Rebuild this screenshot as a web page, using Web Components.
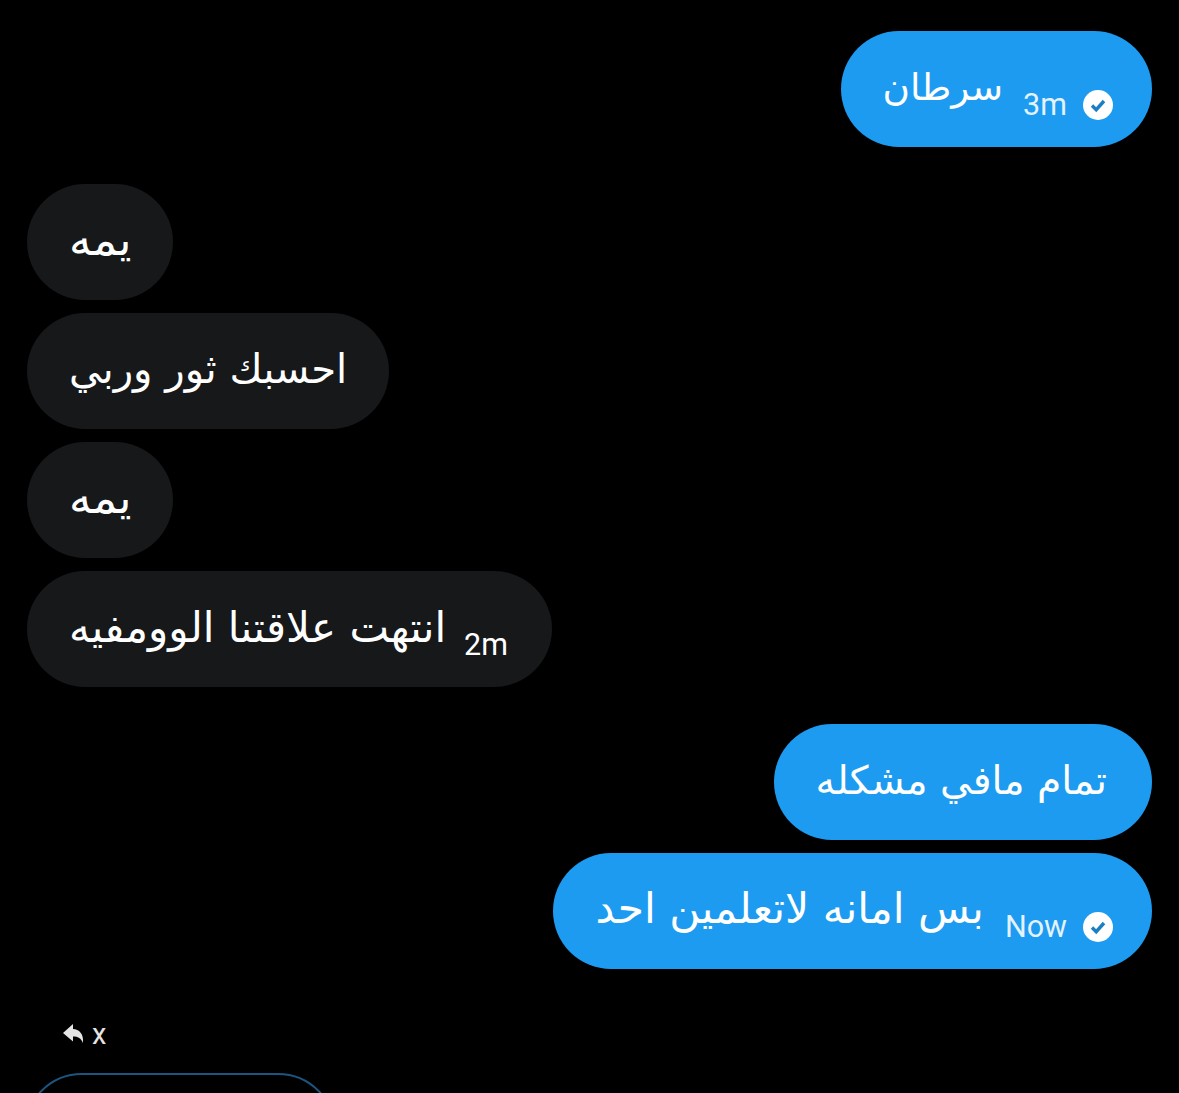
<!DOCTYPE html>
<html>
<head>
<meta charset="utf-8">
<title>Messages</title>
<style>
  html, body { margin: 0; height: 100%; background: #000; overflow: hidden; }
  body { font-family: "DejaVu Sans", sans-serif; }
</style>
</head>
<body>
<chat-thread>
  <chat-bubble sent time="3m" read size="37.4" trail="20">سرطان</chat-bubble>
  <chat-bubble group size="44.8">يمه</chat-bubble>
  <chat-bubble size="40.2">احسبك ثور وربي</chat-bubble>
  <chat-bubble size="44.8">يمه</chat-bubble>
  <chat-bubble time="2m" size="42" trail="18">انتهت علاقتنا الوومفيه</chat-bubble>
  <chat-bubble sent group size="39.3" trail="3">تمام مافي مشكله</chat-bubble>
  <chat-bubble sent time="Now" read size="42.4" trail="21">بس امانه لاتعلمين احد</chat-bubble>
  <reply-label>x</reply-label>
  <reply-box></reply-box>
</chat-thread>
<script>
(function () {
    let threadTmpl = document.createElement("template");
    threadTmpl.innerHTML = `
      <style>
          :host {
              display: flex;
              flex-direction: column;
              box-sizing: border-box;
              height: 100vh;
              overflow: hidden;
              padding: 31px 27px 0 27px;
              gap: 13px;
          }
      </style>
      <slot></slot>
    `;

    let bubbleTmpl = document.createElement("template");
    bubbleTmpl.innerHTML = `
      <style>
          :host {
              display: flex;
              flex: none;
              align-self: flex-start;
              box-sizing: border-box;
              height: 116px;
              padding: 0 42px;
              border-radius: 58px;
              align-items: center;
              background: #16181a;
              color: #fff;
          }
          :host([sent]) {
              align-self: flex-end;
              background: #1d9bf0;
          }
          :host([group]) {
              margin-top: 24px;
          }
          .text {
              direction: rtl;
              font: var(--size, 40px)/1 "DejaVu Sans", sans-serif;
              white-space: nowrap;
              margin-top: -3px;
              margin-right: var(--trail, 0);
          }
          .meta {
              display: flex;
              align-items: center;
              gap: 15px;
              margin-top: 31px;
              margin-right: 2px;
              font: 30.5px/1 Roboto, "Liberation Sans", sans-serif;
          }
          .time { position: relative; top: 1px; }
          :host([sent]) .meta {
              color: #e3f2fd;
              margin-right: -4px;
          }
          .meta[hidden] { display: none; }
          svg { width: 32px; height: 32px; display: block; }
          svg[hidden] { display: none; }
      </style>
      <span class="text"><slot></slot></span>
      <span class="meta">
        <span class="time"></span>
        <svg viewBox="0 0 32 32">
          <circle cx="16" cy="16" r="15" fill="#fff"/>
          <path d="M10 16.500l4.200 4.200L22 12" fill="none" stroke="#1c7fc4" stroke-width="3.400"/>
        </svg>
      </span>
    `;

    let labelTmpl = document.createElement("template");
    labelTmpl.innerHTML = `
      <style>
          :host {
              display: flex;
              flex: none;
              align-items: center;
              gap: 8px;
              margin: 32px 0 0 35px;
              height: 40px;
              color: #e4e4e4;
              font: 29px/1 Roboto, "Liberation Sans", sans-serif;
          }
          svg { width: 22px; height: 22px; display: block; margin-top: -2px; }
      </style>
      <svg viewBox="0 0 22 22"><path fill="#e4e4e4" d="M1 11L11 2v5c6 0 11 5 10 14-2-5-5-6.500-10-6.500v5z"/></svg>
      <slot></slot>
    `;

    let boxTmpl = document.createElement("template");
    boxTmpl.innerHTML = `
      <style>
          :host {
              display: block;
              flex: none;
              box-sizing: border-box;
              width: 312px;
              height: 116px;
              margin: 6px 0 0 -3px;
              border: 2px solid #1c5580;
              border-radius: 58px;
          }
      </style>
    `;

    class ChatThread extends HTMLElement {
        constructor() {
            super();
            this.attachShadow({ mode: "open" }).appendChild(threadTmpl.content.cloneNode(true));
        }
    }

    class ChatBubble extends HTMLElement {
        constructor() {
            super();
            this.attachShadow({ mode: "open" }).appendChild(bubbleTmpl.content.cloneNode(true));
        }
        connectedCallback() {
            let time = this.getAttribute("time");
            let size = this.getAttribute("size");
            let trail = this.getAttribute("trail");
            if (size) {
                this.style.setProperty("--size", size + "px");
            }
            if (trail) {
                this.style.setProperty("--trail", trail + "px");
            }
            if (!time) {
                this.shadowRoot.querySelector(".meta").hidden = true;
                return;
            }
            this.shadowRoot.querySelector(".time").textContent = time;
            // svg elements have no hidden property, so go through the attribute
            this.shadowRoot.querySelector("svg").toggleAttribute("hidden", !this.hasAttribute("read"));
        }
    }

    class ReplyLabel extends HTMLElement {
        constructor() {
            super();
            this.attachShadow({ mode: "open" }).appendChild(labelTmpl.content.cloneNode(true));
        }
    }

    class ReplyBox extends HTMLElement {
        constructor() {
            super();
            this.attachShadow({ mode: "open" }).appendChild(boxTmpl.content.cloneNode(true));
        }
    }

    customElements.define("chat-thread", ChatThread);
    customElements.define("chat-bubble", ChatBubble);
    customElements.define("reply-label", ReplyLabel);
    customElements.define("reply-box", ReplyBox);
})();
</script>
</body>
</html>
